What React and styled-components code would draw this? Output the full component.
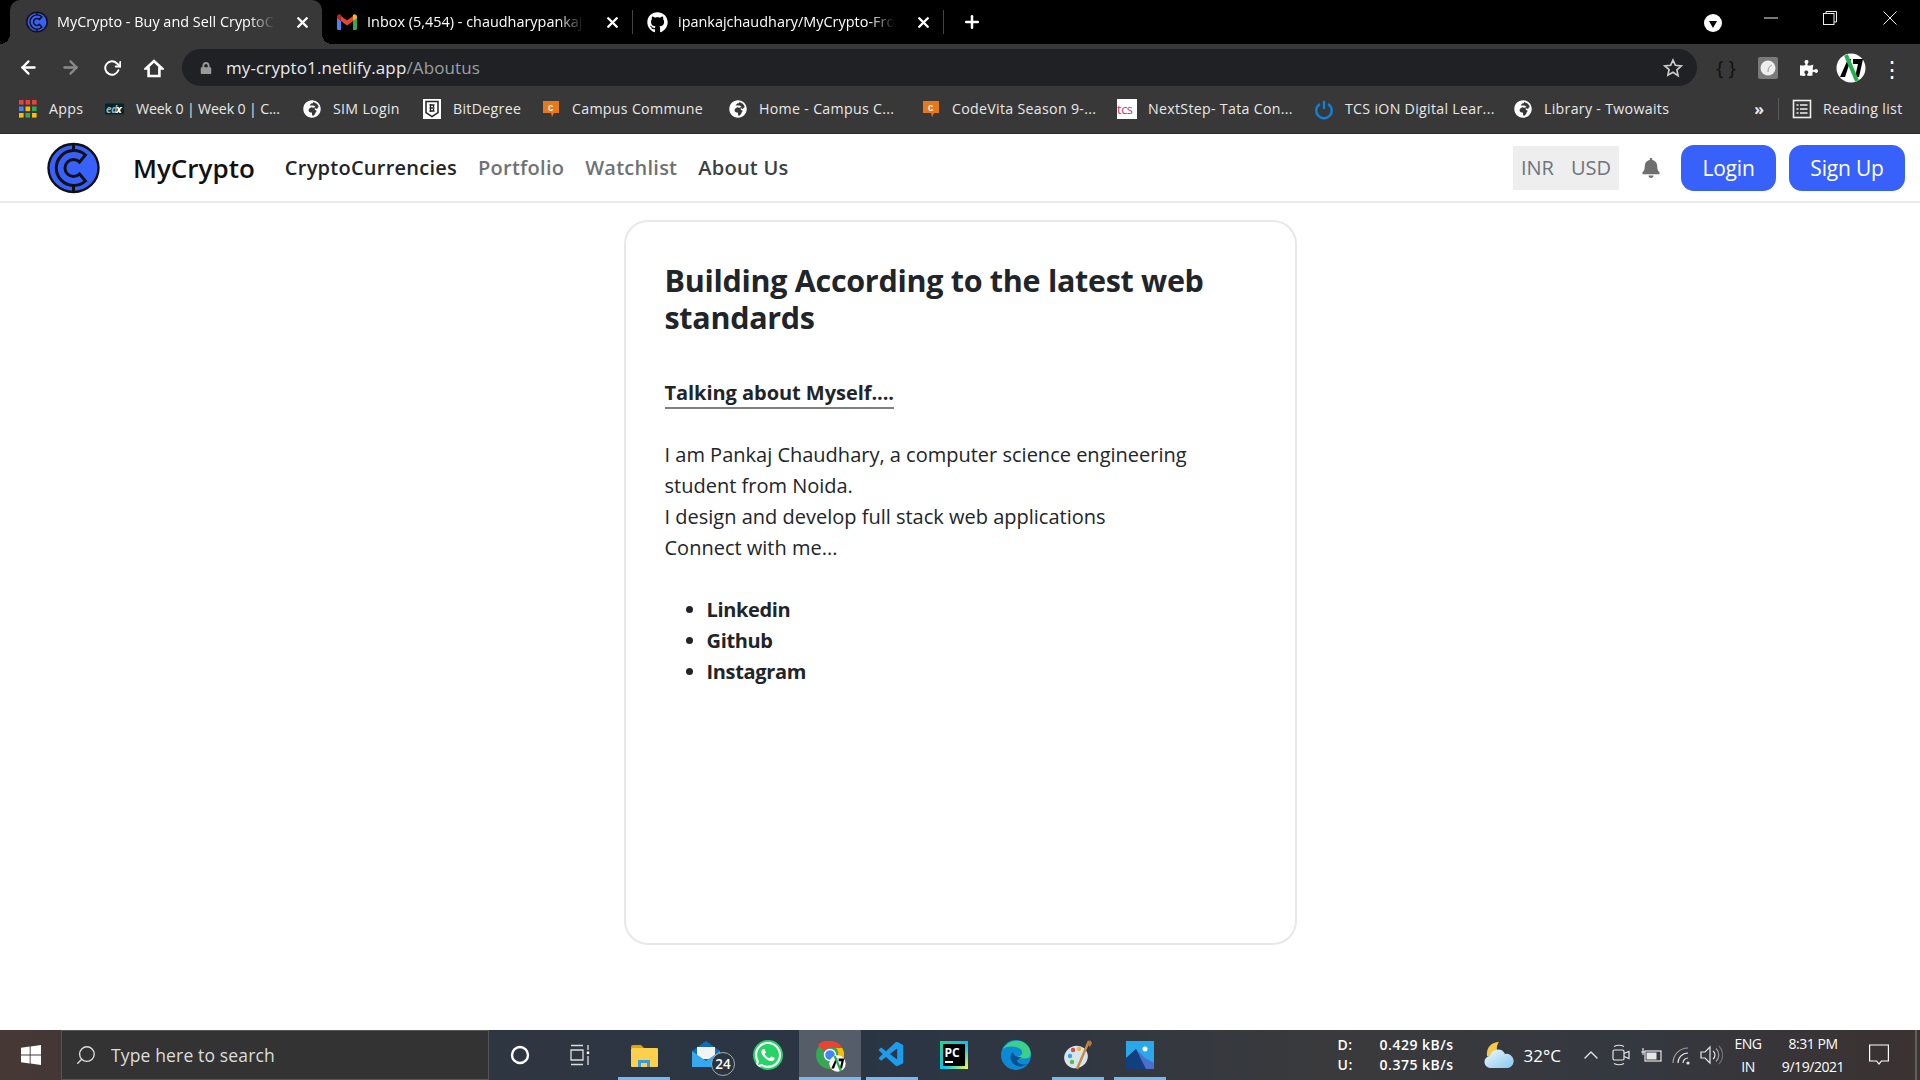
import React from 'react';
import styled, { createGlobalStyle } from 'styled-components';
import { FaGithub, FaWhatsapp, FaBell, FaPuzzlePiece, FaLock, FaGlobeAfrica } from 'react-icons/fa';
import { VscVscode } from 'react-icons/vsc';
import { FiArrowLeft, FiArrowRight, FiRotateCw, FiX, FiPlus, FiSearch, FiChevronUp } from 'react-icons/fi';

const ui = '"Open Sans", "Noto Sans", sans-serif';

const GlobalStyle = createGlobalStyle`
  html, body { margin: 0; padding: 0; background: #fff; }
  body { font-family: ${ui}; color: #212529; }
  * { box-sizing: border-box; }
`;

const Screen = styled.div`
  width: 1920px;
  height: 1080px;
  display: flex;
  flex-direction: column;
  overflow: hidden;
`;

/* browser tabs */
const TabStrip = styled.div`
  height: 44px;
  flex: none;
  background: #000;
  display: flex;
  align-items: stretch;
  padding-left: 10px;
  color: #fff;
`;

const Tab = styled.div`
  position: relative;
  width: ${({ $w }) => $w}px;
  display: flex;
  align-items: center;
  padding: 0 0 0 ${({ $pad }) => $pad || 16}px;
  border-radius: 10px 10px 0 0;
  background: ${({ $active }) => ($active ? '#383838' : 'transparent')};
  gap: ${({ $gap }) => $gap || 10}px;

  ${({ $active }) => $active && `
    &::before, &::after {
      content: '';
      position: absolute;
      bottom: 0;
      width: 10px;
      height: 10px;
    }
    &::before { left: -10px; background: radial-gradient(circle at 0 0, transparent 10px, #383838 10px); }
    &::after { right: -10px; background: radial-gradient(circle at 100% 0, transparent 10px, #383838 10px); }
  `}
`;

const TabTitle = styled.span`
  flex: 1;
  min-width: 0;
  margin-top: -2px;
  white-space: nowrap;
  font-size: 14.4px;
  letter-spacing: 0.02px;
  mask-image: linear-gradient(to right, #000 88%, transparent 100%);
`;

const TabClose = styled(FiX)`
  font-size: 17px;
  stroke-width: 3.4;
  margin: 0 11px 0 10px;
  flex: none;
`;

const TabDivider = styled.div`
  width: 1px;
  height: 24px;
  margin: 10px 0;
  background: #444;
`;

const NewTab = styled(FiPlus)`
  font-size: 20px;
  stroke-width: 3;
  margin: 12px 0 0 18px;
`;

const StripRight = styled.div`
  margin-left: auto;
  display: flex;
  align-items: center;
`;

const ProfileDrop = styled.div`
  width: 18px;
  height: 18px;
  margin: 2px 19px 0 0;
  border-radius: 50%;
  background: #fff;
  display: flex;
  align-items: center;
  justify-content: center;
  &::after {
    content: '';
    margin-top: 2px;
    border-left: 4.5px solid transparent;
    border-right: 4.5px solid transparent;
    border-top: 7px solid #000;
  }
`;

const WindowButton = styled.div`
  width: ${({ $w }) => $w}px;
  height: 36px;
  display: flex;
  align-items: center;
  justify-content: center;
  margin-top: -8px;
`;

/* address bar */
const Toolbar = styled.div`
  height: 42px;
  flex: none;
  background: #383838;
  display: flex;
  align-items: flex-end;
  padding: 0 0 0 18px;
  color: #fff;
`;

const NavButton = styled.div`
  width: 42px;
  height: 37px;
  margin-left: ${({ $first }) => ($first ? '-11px' : '0')};
  display: flex;
  align-items: center;
  justify-content: center;
  font-size: 21px;
  color: ${({ $dim }) => ($dim ? '#8a8a8a' : '#fff')};
  & svg { stroke-width: 2.6; }
`;

const Omnibox = styled.div`
  width: 1515px;
  height: 37px;
  margin-left: 7px;
  border-radius: 19px;
  background: #202124;
  display: flex;
  align-items: center;
  padding: 0 14px 0 18px;
`;

const LockIcon = styled(FaLock)`
  font-size: 12px;
  color: #9a9a9a;
`;

const Url = styled.span`
  margin-left: 14px;
  font-size: 17px;
  letter-spacing: 0.12px;
  color: #e8eaed;
  & em {
    font-style: normal;
    color: #9aa0a6;
  }
`;

const StarButton = styled.div`
  margin-left: auto;
  display: flex;
`;

const ExtButton = styled.div`
  width: ${({ $w }) => $w || 41}px;
  height: 37px;
  display: flex;
  align-items: center;
  justify-content: center;
  font-size: ${({ $size }) => $size || 18}px;
  color: ${({ $color }) => $color || '#fff'};
`;

/* bookmarks */
const BookmarkBar = styled.div`
  height: 48px;
  flex: none;
  padding: 0 0 2px 18px;
  background: #383838;
  border-bottom: 1px solid #2a2a2a;
  display: flex;
  align-items: center;
  color: #e8e8e8;
`;

const Bookmark = styled.div`
  width: ${({ $w }) => $w}px;
  flex: none;
  display: flex;
  align-items: center;
  gap: 11px;
  font-size: 14.2px;
  letter-spacing: ${({ $tight }) => ($tight ? '-0.15px' : '0.3px')};
  white-space: nowrap;
`;

const BookmarkIcon = styled.span`
  width: 20px;
  height: 20px;
  flex: none;
  display: flex;
  align-items: center;
  justify-content: center;
  font-size: 18px;
  color: #fff;
`;

const Chevrons = styled.span`
  margin-left: auto;
  font-size: 16px;
  font-weight: 700;
  margin-right: 14px;
`;

const BarDivider = styled.span`
  width: 1px;
  height: 22px;
  background: #5a5a5a;
  margin-right: 13px;
`;

/* site navbar */
const SiteNav = styled.nav`
  height: 69px;
  flex: none;
  border-bottom: 2px solid #eaeaea;
  display: flex;
  align-items: center;
  padding: 0 15px 0 46px;
`;

const LogoMark = styled.svg`
  width: 55px;
  height: 52px;
  flex: none;
`;

const Brand = styled.span`
  margin-left: 32px;
  font-size: 26px;
  font-weight: 600;
  color: #111;
`;

const NavLinks = styled.div`
  margin-left: 30px;
  display: flex;
  gap: 21px;
`;

const NavLink = styled.a`
  font-size: 20px;
  font-weight: 600;
  letter-spacing: 0.25px;
  color: ${({ $tone }) => $tone};
`;

const Currency = styled.div`
  margin-left: auto;
  width: 106px;
  height: 44px;
  background: #eee;
  display: flex;
  align-items: center;
  justify-content: center;
  gap: 17px;
  font-size: 20px;
  color: #6c757d;
`;

const BellIcon = styled(FaBell)`
  margin: 0 20px 0 22px;
  font-size: 20px;
  color: #6f6f6f;
`;

const Primary = styled.button`
  width: ${({ $w }) => $w}px;
  height: 46px;
  margin-left: ${({ $gap }) => $gap || 0}px;
  border: 0;
  border-radius: 13px;
  background: #3861fb;
  color: #fff;
  font-family: ${ui};
  font-size: 21px;
  letter-spacing: -0.2px;
`;

/* page content */
const Main = styled.main`
  flex: 1;
  min-height: 0;
  display: flex;
  justify-content: center;
  padding: 17px 0 0 0;
  background: #fff;
`;

const Card = styled.section`
  width: 673px;
  height: 725px;
  border: 2px solid #e8e8e8;
  border-radius: 24px;
  padding: 40px 38px 0 39px;
`;

const Heading = styled.h2`
  margin: 0;
  font-size: 30.5px;
  line-height: 37px;
  font-weight: 700;
  letter-spacing: -0.3px;
  color: #212529;
`;

const SubHeading = styled.h3`
  display: inline-block;
  margin: 42px 0 0;
  font-size: 20px;
  line-height: 29px;
  font-weight: 700;
  letter-spacing: -0.05px;
  border-bottom: 2px solid #808080;
`;

const Paragraph = styled.p`
  margin: 30px 0 0;
  font-size: 20px;
  line-height: 31px;
  color: #212529;
`;

const LinkList = styled.ul`
  margin: 31px 0 0;
  padding-left: 42px;
  font-size: 20px;
  line-height: 31px;
  font-weight: 700;
  letter-spacing: -0.35px;
`;

/* windows taskbar */
const Taskbar = styled.footer`
  height: 50px;
  flex: none;
  display: flex;
  color: #fff;
  background: linear-gradient(to right, #463835 0%, #2f3641 25%, #2a3544 45%, #3a3a3c 70%, #343840 85%, #3b3231 100%);
`;

const StartButton = styled.div`
  width: 61px;
  display: flex;
  align-items: center;
  justify-content: center;
`;

const SearchBox = styled.div`
  width: 428px;
  background: #333;
  border: 1px solid #555;
  display: flex;
  align-items: center;
  gap: 14px;
  padding-left: 13px;
  font-size: 17.5px;
  letter-spacing: 0.15px;
  color: #ddd;
`;

const SearchIcon = styled(FiSearch)`
  font-size: 22px;
  stroke-width: 1.5;
  transform: scaleX(-1);
`;

const Slot = styled.div`
  position: relative;
  width: 62px;
  flex: none;
  display: flex;
  align-items: center;
  justify-content: center;
  padding-right: ${({ $nudge }) => $nudge || 0}px;
  background: ${({ $active }) => ($active ? 'rgba(255,255,255,0.2)' : 'transparent')};
  &::after {
    content: '';
    display: ${({ $running, $active }) => ($running || $active ? 'block' : 'none')};
    position: absolute;
    bottom: 0;
    left: ${({ $active }) => ($active ? 0 : '5px')};
    right: ${({ $active }) => ($active ? 0 : '5px')};
    height: 3px;
    background: #76b9ed;
  }
`;

const MailBadge = styled.span`
  position: absolute;
  right: 2px;
  bottom: 4px;
  width: 24px;
  height: 24px;
  border: 1px solid #aaa;
  border-radius: 50%;
  background: #2b3340;
  display: flex;
  align-items: center;
  justify-content: center;
  font-size: 13.5px;
  font-weight: 600;
`;

const ChromeBadge = styled.span`
  position: absolute;
  right: 15px;
  bottom: 8px;
  display: flex;
`;

const Tray = styled.div`
  margin-left: auto;
  display: flex;
  align-items: center;
  padding-right: 3px;
`;

const Speed = styled.div`
  display: grid;
  grid-template-columns: 42px auto;
  font-size: 14px;
  line-height: 20px;
  font-weight: 600;
  margin-right: 30px;
  letter-spacing: 0.5px;
`;

const Temp = styled.span`
  font-size: 17px;
  margin: 0 15px 0 10px;
`;

const TrayIcon = styled.span`
  width: 30px;
  display: flex;
  justify-content: center;
  color: #e6e6e6;
`;

const TrayText = styled.div`
  display: flex;
  flex-direction: column;
  align-items: center;
  font-size: 14px;
  line-height: 23px;
  letter-spacing: -0.45px;
  width: ${({ $w }) => $w}px;
  margin-left: ${({ $gap }) => $gap || 0}px;
`;

const NoteButton = styled.span`
  display: flex;
  margin: 0 26px 0 18px;
`;

const Sliver = styled.div`
  width: 2px;
  background: #5f5f5f;
  align-self: stretch;
`;

const CoinLogo = ({ size = 20, line = 3.6 }) => (
  <svg width={size} height={size} viewBox="0 0 54 52">
    <ellipse cx="27" cy="26" rx="25" ry="24" fill="#3861fb" stroke="#111" strokeWidth={line} />
    <path d="M39 13A17.5 17.5 0 1 0 39 39L33 32A8.5 8.5 0 1 1 33 20Z" fill="none" stroke="#111" strokeWidth={line} />
    <path d="M27 3v6M27 43v6" stroke="#111" strokeWidth={line} />
  </svg>
);

const GmailIcon = () => (
  <svg width="20" height="16" viewBox="0 0 20 16" fill="none">
    <path d="M0 3v11.5A1.5 1.5 0 0 0 1.5 16H4V7z" fill="#4285f4" />
    <path d="M20 3v11.5a1.5 1.5 0 0 1-1.5 1.5H16V7z" fill="#34a853" />
    <path d="M4 7l6 4.5L16 7V2l-6 4.5L4 2z" fill="#ea4335" />
    <path d="M0 3c0-2.4 2.6-3.4 4-2v6L0 4z" fill="#c5221f" />
    <path d="M20 3c0-2.4-2.6-3.4-4-2v6l4-3z" fill="#fbbc04" />
  </svg>
);

const AppsGrid = () => (
  <svg width="18" height="18" viewBox="0 0 18 18">
    {['#ea4335', '#ea4335', '#ea4335', '#4285f4', '#fbbc04', '#34a853', '#fbbc04', '#34a853', '#fbbc04'].map((c, i) => (
      <rect key={i} x={(i % 3) * 6.5} y={Math.floor(i / 3) * 6.5} width="4.6" height="4.6" fill={c} />
    ))}
  </svg>
);

const EdxIcon = () => (
  <svg width="22" height="14" viewBox="0 0 22 14">
    <rect y="1" width="21" height="12" rx="1" fill="#02262b" />
    <text x="1" y="11" fontSize="11" fontStyle="italic" fontWeight="700" fontFamily="Open Sans" fill="#9fb5bb">ed</text>
    <text x="12" y="11" fontSize="12" fontStyle="italic" fontWeight="700" fontFamily="Open Sans" fill="#fff">x</text>
  </svg>
);

const ShieldIcon = () => (
  <svg width="20" height="22" viewBox="0 0 20 22">
    <path d="M1 1h18v20H1z" fill="#fff" />
    <path d="M4 3.5h12v11l-6 4-6-4z" fill="none" stroke="#222" strokeWidth="1.5" />
    <path d="M7.5 7h5M7.5 10h5M7.5 13h5M8.5 6v8M11.5 7v2M11.5 11v2" stroke="#222" strokeWidth="1.3" />
  </svg>
);

const CampusIcon = () => (
  <svg width="18" height="18" viewBox="0 0 18 18">
    <path d="M1 1h16v12h-5l-2 4-1-4H1z" fill="#e8781a" />
    <text x="6" y="11" fontSize="9" fontWeight="700" fontFamily="Liberation Mono" fill="#fff">C</text>
  </svg>
);

const TcsIcon = () => (
  <svg width="20" height="20" viewBox="0 0 20 20">
    <rect width="20" height="20" fill="#fff" />
    <text x="0" y="15" fontSize="13" fontFamily="Open Sans" letterSpacing="-0.5" fill="#d6336c">tcs</text>
  </svg>
);

const PowerIcon = () => (
  <svg width="22" height="22" viewBox="0 0 22 22" fill="none" stroke="#1081d8" strokeWidth="2.6">
    <path d="M6.5 5.5a8.5 8.5 0 1 0 9 0" />
    <path d="M11 2v9" />
  </svg>
);

const ReadingIcon = () => (
  <svg width="20" height="20" viewBox="0 0 20 20" fill="none" stroke="#eee" strokeWidth="1.6">
    <rect x="1.5" y="1.5" width="17" height="17" />
    <path d="M4.5 6h2M8 6h7.5M4.5 10h2M8 10h7.5M4.5 14h2M8 14h7.5" />
  </svg>
);

const AvatarIcon = ({ size = 30 }) => (
  <svg width={size} height={size} viewBox="0 0 30 30">
    <circle cx="15" cy="15" r="14.5" fill="#fff" />
    <path d="M4 24L12 6h3L9 24zM17 6h10l-4 18h-4l3-13h-5z" fill="#000" />
    <path d="M10 2l11 26" stroke="#22b14c" strokeWidth="4" />
  </svg>
);

const HomeGlyph = () => (
  <svg width="20" height="20" viewBox="0 0 20 20" fill="none" stroke="#fff" strokeWidth="2.2">
    <path d="M2 10.5L10 3l8 7.5h-2.6V18H4.6v-7.5z" />
  </svg>
);

const MinGlyph = () => (
  <svg width="14" height="14" viewBox="0 0 14 14" stroke="#eee" strokeWidth="1">
    <path d="M0 7h14" />
  </svg>
);

const RestoreGlyph = () => (
  <svg width="14" height="14" viewBox="0 0 14 14" fill="none" stroke="#eee" strokeWidth="1">
    <rect x="0.5" y="2.5" width="10.5" height="11" />
    <path d="M3 2.5V0.5h10.5V11H11" />
  </svg>
);

const CloseGlyph = () => (
  <svg width="14" height="14" viewBox="0 0 14 14" stroke="#eee" strokeWidth="1">
    <path d="M0.5 0.5l13 13M13.5 0.5l-13 13" />
  </svg>
);

const StarOutline = () => (
  <svg width="20" height="20" viewBox="0 0 24 24" fill="none" stroke="#ccc" strokeWidth="2">
    <path d="M12 2.5l2.9 6.3 6.9.8-5.1 4.7 1.4 6.8L12 17.1l-6.1 3.5 1.4-6.8L2.2 9.6l6.9-.8z" />
  </svg>
);

const ExtTile = () => (
  <svg width="20" height="22" viewBox="0 0 20 22">
    <rect width="20" height="22" rx="2" fill="#7a7a7a" />
    <circle cx="10" cy="11" r="7.5" fill="#eee" />
    <path d="M10 15c0-4 1.5-6 4-7" fill="none" stroke="#999" strokeWidth="1" />
  </svg>
);

const Windows = () => (
  <svg width="20" height="20" viewBox="0 0 20 20" fill="#fff">
    <path d="M0 2.8l8.7-1.2v7.9H0zM9.6 1.5L20 0v9.5H9.6zM0 10.4h8.7v8L0 17.2zM9.6 10.4H20V20L9.6 18.5z" />
  </svg>
);

const Cortana = () => (
  <svg width="20" height="20" viewBox="0 0 20 20" fill="none" stroke="#fff" strokeWidth="2.4">
    <circle cx="10" cy="10" r="8" />
  </svg>
);

const TaskView = () => (
  <svg width="20" height="22" viewBox="0 0 20 22" fill="none" stroke="#ddd" strokeWidth="1.3">
    <path d="M1 1.5h12M1 20.5h12M1 6h12v10H1z" />
    <path d="M18 1v5M18 12v9" />
    <rect x="16.8" y="7.5" width="2.4" height="2.6" fill="#fff" stroke="none" />
  </svg>
);

const FolderIcon = () => (
  <svg width="28" height="23" viewBox="0 0 28 23">
    <path d="M1 3a2 2 0 0 1 2-2h8l3 3H1z" fill="#e2a200" />
    <rect x="1" y="4" width="27" height="19" rx="1" fill="#fbd04c" />
    <path d="M8 23v-7h12v7h-3v-4h-6v4z" fill="#3a9ae0" />
  </svg>
);

const MailIcon = () => (
  <svg width="32" height="32" viewBox="0 0 32 32">
    <path d="M16 2L30 12v16H2V12z" fill="#0f6cbd" />
    <rect x="7" y="8" width="18" height="12" fill="#f3f3f3" />
    <path d="M2 12l14 10 14-10v16H2z" fill="#37a9ee" />
  </svg>
);

const ChromeIcon = () => (
  <svg width="28" height="28" viewBox="0 0 28 28">
    <circle cx="14" cy="14" r="14" fill="#34a853" />
    <path d="M14 0a14 14 0 0 1 12.1 7H14a7 7 0 0 0-6.1 3.5L2 3.5A14 14 0 0 1 14 0z" fill="#ea4335" />
    <path d="M26.2 7A14 14 0 0 1 14 28l6-10.5A7 7 0 0 0 20 7z" fill="#fbbc04" />
    <circle cx="14" cy="14" r="5.5" fill="#4285f4" stroke="#fff" strokeWidth="1.4" />
  </svg>
);

const PycharmIcon = () => (
  <svg width="28" height="28" viewBox="0 0 28 28">
    <defs>
      <linearGradient id="pc" x1="0" y1="0" x2="1" y2="1">
        <stop offset="0" stopColor="#21d789" />
        <stop offset="0.55" stopColor="#07c3f2" />
        <stop offset="1" stopColor="#fcf84a" />
      </linearGradient>
    </defs>
    <rect width="28" height="28" fill="url(#pc)" />
    <rect x="3" y="3" width="22" height="22" fill="#000" />
    <text x="4.5" y="15.5" fontSize="12" fontWeight="700" fontFamily="Open Sans" fill="#fff">PC</text>
    <rect x="5" y="20" width="8" height="2" fill="#fff" />
  </svg>
);

const EdgeIcon = () => (
  <svg width="30" height="30" viewBox="0 0 30 30">
    <circle cx="15" cy="15" r="15" fill="#0c8ad6" />
    <path d="M2 9C6 1 15-1 22 2c6 3 9 9 7 15-4 2-10 2-13 0 4-1 6-3 5-6-2-5-14-6-19-2z" fill="#3bd08a" />
    <path d="M21 17c-5 0-9-1-9-5-4 3-3 10 2 13 3 2 8 2 12-1-4 1-9 0-10-3 1-2 3-3 5-4z" fill="#0a4f91" />
  </svg>
);

const PaintIcon = () => (
  <svg width="30" height="32" viewBox="0 0 30 32">
    <ellipse cx="13" cy="18" rx="12" ry="11" fill="#d6e4ee" transform="rotate(-25 13 18)" />
    <circle cx="7" cy="17" r="2.2" fill="#35a1e0" />
    <circle cx="10" cy="11" r="2.2" fill="#e0483c" />
    <circle cx="16" cy="10" r="2.2" fill="#f2b33d" />
    <circle cx="9" cy="23" r="2.2" fill="#5fb84a" />
    <path d="M26 2L14 30" stroke="#c98a3f" strokeWidth="2.4" />
    <path d="M24 5l3-4 2 3-2 4z" fill="#b47a3a" />
  </svg>
);

const PhotosIcon = () => (
  <svg width="28" height="28" viewBox="0 0 28 28">
    <rect width="28" height="28" fill="#29a9ea" />
    <circle cx="19" cy="8" r="2.5" fill="#fff" />
    <path d="M0 28V17L10 8l9 9 9 5v6z" fill="#4c6fcf" />
    <path d="M0 28V17L10 8l10 20z" fill="#123f7f" />
  </svg>
);

const WhatsappTile = styled(FaWhatsapp)`
  font-size: 30px;
  color: #fff;
  background: #25d366;
  border-radius: 50%;
`;

const WeatherIcon = () => (
  <svg width="30" height="26" viewBox="0 0 30 26">
    <defs>
      <linearGradient id="cloud" x1="0" y1="0" x2="1" y2="1">
        <stop offset="0" stopColor="#eef8fd" />
        <stop offset="1" stopColor="#85c8f0" />
      </linearGradient>
    </defs>
    <path d="M15 0C8 0 2 5 3 14c3 2 10 1 13-2-4-3-4-8-1-12z" fill="#f7c948" />
    <path d="M7 26a6 6 0 0 1-1-12 8 8 0 0 1 15-2 7 7 0 0 1 3 14z" fill="url(#cloud)" />
  </svg>
);

const VideoGlyph = () => (
  <svg width="20" height="24" viewBox="0 0 20 24" fill="none" stroke="#e6e6e6" strokeWidth="1.2">
    <rect x="2" y="7" width="11" height="10" rx="1.5" />
    <path d="M13 10.5l5-2v7l-5-2M3 3.5q5-2.5 10 0M3 20.5q5 2.5 10 0" />
  </svg>
);

const BatteryGlyph = () => (
  <svg width="21" height="14" viewBox="0 0 21 14" fill="none" stroke="#e6e6e6" strokeWidth="1.2">
    <rect x="4" y="3" width="16" height="10" />
    <rect x="5.5" y="4.5" width="10" height="7" fill="#e6e6e6" stroke="none" />
    <path d="M0 4h4M2 0v7" />
  </svg>
);

const WifiGlyph = () => (
  <svg width="20" height="20" viewBox="0 0 20 20" fill="none" stroke="#e6e6e6" strokeWidth="1.2">
    <path d="M12 18A5 5 0 0 1 17 13M7 18A10 10 0 0 1 17 8" />
    <path d="M2 18A15 15 0 0 1 17 3" opacity="0.6" />
    <circle cx="17" cy="18" r="1.6" fill="#e6e6e6" stroke="none" />
  </svg>
);

const VolumeGlyph = () => (
  <svg width="24" height="22" viewBox="0 0 24 22" fill="none" stroke="#e6e6e6" strokeWidth="1.2">
    <path d="M2 8h4l5-5v16l-5-5H2z" />
    <path d="M14 7a5 5 0 0 1 0 8" />
    <path d="M17 4.5a9 9 0 0 1 0 13" opacity="0.6" />
    <path d="M20 2a13 13 0 0 1 0 18" opacity="0.35" />
  </svg>
);

const NoteGlyph = () => (
  <svg width="20" height="22" viewBox="0 0 20 22" fill="none" stroke="#fff" strokeWidth="1.2">
    <path d="M0.6 1h18.8v16h-7l-2.4 3-2.4-3h-7z" />
  </svg>
);

export default function App() {
  return (
    <Screen>
      <GlobalStyle />
      <TabStrip>
        <Tab $active $w={312} $pad={16} $gap={9}>
          <CoinLogo size={22} />
          <TabTitle>MyCrypto - Buy and Sell CryptoC</TabTitle>
          <TabClose />
        </Tab>
        <Tab $w={310} $pad={15}>
          <GmailIcon />
          <TabTitle>Inbox (5,454) - chaudharypankaja</TabTitle>
          <TabClose />
        </Tab>
        <TabDivider />
        <Tab $w={310} $pad={14}>
          <FaGithub size={21} />
          <TabTitle>ipankajchaudhary/MyCrypto-Fro</TabTitle>
          <TabClose />
        </Tab>
        <TabDivider />
        <NewTab />
        <StripRight>
          <ProfileDrop />
          <WindowButton $w={59}><MinGlyph /></WindowButton>
          <WindowButton $w={59}><RestoreGlyph /></WindowButton>
          <WindowButton $w={61}><CloseGlyph /></WindowButton>
        </StripRight>
      </TabStrip>

      <Toolbar>
        <NavButton $first><FiArrowLeft /></NavButton>
        <NavButton $dim><FiArrowRight /></NavButton>
        <NavButton><FiRotateCw size={18} /></NavButton>
        <NavButton><HomeGlyph /></NavButton>
        <Omnibox>
          <LockIcon />
          <Url>my-crypto1.netlify.app<em>/Aboutus</em></Url>
          <StarButton><StarOutline /></StarButton>
        </Omnibox>
        <ExtButton $color="#111" $size={20} $w={58}>{'{ }'}</ExtButton>
        <ExtButton $w={26}><ExtTile /></ExtButton>
        <ExtButton $w={55}><FaPuzzlePiece /></ExtButton>
        <ExtButton $w={30}><AvatarIcon /></ExtButton>
        <ExtButton $w={52} $size={22}>&#8942;</ExtButton>
      </Toolbar>

      <BookmarkBar>
        <Bookmark $w={87}><BookmarkIcon><AppsGrid /></BookmarkIcon>Apps</Bookmark>
        <Bookmark $w={197} $tight><BookmarkIcon><EdxIcon /></BookmarkIcon>Week 0 | Week 0 | C...</Bookmark>
        <Bookmark $w={120}><BookmarkIcon><FaGlobeAfrica /></BookmarkIcon>SIM Login</Bookmark>
        <Bookmark $w={119}><BookmarkIcon><ShieldIcon /></BookmarkIcon>BitDegree</Bookmark>
        <Bookmark $w={187}><BookmarkIcon><CampusIcon /></BookmarkIcon>Campus Commune</Bookmark>
        <Bookmark $w={193}><BookmarkIcon><FaGlobeAfrica /></BookmarkIcon>Home - Campus C...</Bookmark>
        <Bookmark $w={196}><BookmarkIcon><CampusIcon /></BookmarkIcon>CodeVita Season 9-...</Bookmark>
        <Bookmark $w={197}><BookmarkIcon><TcsIcon /></BookmarkIcon>NextStep- Tata Con...</Bookmark>
        <Bookmark $w={199}><BookmarkIcon><PowerIcon /></BookmarkIcon>TCS iON Digital Lear...</Bookmark>
        <Bookmark $w={160}><BookmarkIcon><FaGlobeAfrica /></BookmarkIcon>Library - Twowaits</Bookmark>
        <Chevrons>»</Chevrons>
        <BarDivider />
        <Bookmark $w={128}><BookmarkIcon><ReadingIcon /></BookmarkIcon>Reading list</Bookmark>
      </BookmarkBar>

      <SiteNav>
        <LogoMark viewBox="0 0 54 52">
          <ellipse cx="27" cy="26" rx="25" ry="24" fill="#3861fb" stroke="#111" strokeWidth="2.4" />
          <path d="M39 13A17.5 17.5 0 1 0 39 39L33 32A8.5 8.5 0 1 1 33 20Z" fill="none" stroke="#111" strokeWidth="3" />
          <path d="M27 3v6M27 43v6" stroke="#111" strokeWidth="3" />
        </LogoMark>
        <Brand>MyCrypto</Brand>
        <NavLinks>
          <NavLink $tone="#212529">CryptoCurrencies</NavLink>
          <NavLink $tone="#6f7275">Portfolio</NavLink>
          <NavLink $tone="#6f7275">Watchlist</NavLink>
          <NavLink $tone="#3c4043">About Us</NavLink>
        </NavLinks>
        <Currency><span>INR</span><span>USD</span></Currency>
        <BellIcon />
        <Primary $w={95}>Login</Primary>
        <Primary $w={116} $gap={13}>Sign Up</Primary>
      </SiteNav>

      <Main>
        <Card>
          <Heading>Building According to the latest web standards</Heading>
          <SubHeading>Talking about Myself....</SubHeading>
          <Paragraph>
            I am Pankaj Chaudhary, a computer science engineering student from Noida.
            <br />
            I design and develop full stack web applications
            <br />
            Connect with me...
          </Paragraph>
          <LinkList>
            <li>Linkedin</li>
            <li>Github</li>
            <li>Instagram</li>
          </LinkList>
        </Card>
      </Main>

      <Taskbar>
        <StartButton><Windows /></StartButton>
        <SearchBox><SearchIcon />Type here to search</SearchBox>
        <Slot><Cortana /></Slot>
        <Slot $nudge={5}><TaskView /></Slot>
        <Slot $running><FolderIcon /></Slot>
        <Slot><MailIcon /><MailBadge>24</MailBadge></Slot>
        <Slot><WhatsappTile /></Slot>
        <Slot $active><ChromeIcon /><ChromeBadge><AvatarIcon size={17} /></ChromeBadge></Slot>
        <Slot $running><VscVscode size={30} color="#1c9cec" /></Slot>
        <Slot><PycharmIcon /></Slot>
        <Slot><EdgeIcon /></Slot>
        <Slot $running><PaintIcon /></Slot>
        <Slot $running><PhotosIcon /></Slot>
        <Tray>
          <Speed>
            <span>D:</span><span>0.429 kB/s</span>
            <span>U:</span><span>0.375 kB/s</span>
          </Speed>
          <WeatherIcon />
          <Temp>32°C</Temp>
          <TrayIcon><FiChevronUp size={24} strokeWidth={1.4} /></TrayIcon>
          <TrayIcon><VideoGlyph /></TrayIcon>
          <TrayIcon><BatteryGlyph /></TrayIcon>
          <TrayIcon><WifiGlyph /></TrayIcon>
          <TrayIcon><VolumeGlyph /></TrayIcon>
          <TrayText $w={34} $gap={5}><span>ENG</span><span>IN</span></TrayText>
          <TrayText $w={76} $gap={10}><span>8:31 PM</span><span>9/19/2021</span></TrayText>
          <NoteButton><NoteGlyph /></NoteButton>
          <Sliver />
        </Tray>
      </Taskbar>
    </Screen>
  );
}
